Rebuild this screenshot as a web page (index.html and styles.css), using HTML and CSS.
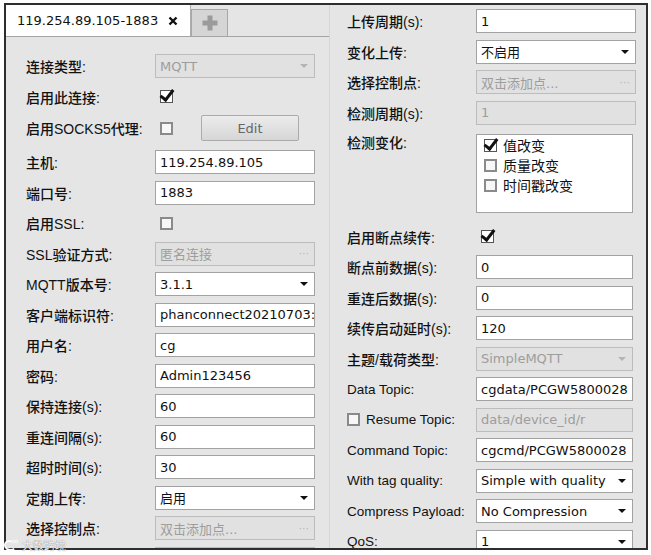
FILE: index.html
```html
<!DOCTYPE html>
<html lang="zh-CN">

<head>
  <meta charset="utf-8">
  <title>MQTT 连接设置</title>
  <link rel="stylesheet" href="styles.css">
</head>

<body>
  <div class="window">

    <!-- Left column: connection -->
    <div class="pane pane-left">
      <div class="tabs">
        <div class="tab tab-active">
          <span>119.254.89.105-1883</span>
          <svg class="tab-close" width="10" height="10" viewBox="0 0 10 10">
            <path d="M1.5 1.5 L8.5 8.5 M8.5 1.5 L1.5 8.5" stroke="#111" stroke-width="2.4" />
          </svg>
        </div>
        <div class="tab tab-add">
          <svg width="18" height="18" viewBox="0 0 18 18">
            <path d="M9 1.5 V16.5 M1.5 9 H16.5" stroke="#9b9b9b" stroke-width="5" />
          </svg>
        </div>
      </div>

      <div class="form">
        <div class="row">
          <label>连接类型:</label>
          <div class="field off">MQTT<span class="caret"></span></div>
        </div>
        <div class="row">
          <label>启用此连接:</label>
          <span class="check on"></span>
        </div>
        <div class="row row-socks">
          <label>启用SOCKS5代理:</label>
          <span class="check"></span>
          <button class="btn">Edit</button>
        </div>
        <div class="row">
          <label>主机:</label>
          <div class="field">119.254.89.105</div>
        </div>
        <div class="row">
          <label>端口号:</label>
          <div class="field">1883</div>
        </div>
        <div class="row">
          <label>启用SSL:</label>
          <span class="check"></span>
        </div>
        <div class="row">
          <label>SSL验证方式:</label>
          <div class="field off">匿名连接<span class="dots">···</span></div>
        </div>
        <div class="row">
          <label>MQTT版本号:</label>
          <div class="field">3.1.1<span class="caret"></span></div>
        </div>
        <div class="row">
          <label>客户端标识符:</label>
          <div class="field">phanconnect20210703:</div>
        </div>
        <div class="row">
          <label>用户名:</label>
          <div class="field">cg</div>
        </div>
        <div class="row">
          <label>密码:</label>
          <div class="field">Admin123456</div>
        </div>
        <div class="row">
          <label>保持连接(s):</label>
          <div class="field">60</div>
        </div>
        <div class="row">
          <label>重连间隔(s):</label>
          <div class="field">60</div>
        </div>
        <div class="row">
          <label>超时时间(s):</label>
          <div class="field">30</div>
        </div>
        <div class="row">
          <label>定期上传:</label>
          <div class="field">启用<span class="caret"></span></div>
        </div>
        <div class="row">
          <label>选择控制点:</label>
          <div class="field off">双击添加点...<span class="dots">···</span></div>
        </div>
        <div class="row">
          <label>&nbsp;</label>
          <div class="field off"></div>
        </div>
      </div>
    </div>

    <!-- Right column: upload / topics -->
    <div class="pane pane-right">
      <div class="form">
        <div class="row">
          <label>上传周期(s):</label>
          <div class="field">1</div>
        </div>
        <div class="row">
          <label>变化上传:</label>
          <div class="field">不启用<span class="caret"></span></div>
        </div>
        <div class="row">
          <label>选择控制点:</label>
          <div class="field off">双击添加点...<span class="dots">···</span></div>
        </div>
        <div class="row">
          <label>检测周期(s):</label>
          <div class="field off">1</div>
        </div>
        <div class="row row-tall">
          <label>检测变化:</label>
          <div class="listbox">
            <div class="item"><span class="check on"></span>值改变</div>
            <div class="item"><span class="check"></span>质量改变</div>
            <div class="item"><span class="check"></span>时间戳改变</div>
          </div>
        </div>
        <div class="row row-resume">
          <label>启用断点续传:</label>
          <span class="check on"></span>
        </div>
        <div class="row">
          <label>断点前数据(s):</label>
          <div class="field narrow">0</div>
        </div>
        <div class="row">
          <label>重连后数据(s):</label>
          <div class="field narrow">0</div>
        </div>
        <div class="row">
          <label>续传启动延时(s):</label>
          <div class="field narrow">120</div>
        </div>
        <div class="row">
          <label>主题/载荷类型:</label>
          <div class="field narrow off">SimpleMQTT<span class="caret"></span></div>
        </div>
        <div class="row">
          <label class="en">Data Topic:</label>
          <div class="field narrow">cgdata/PCGW5800028</div>
        </div>
        <div class="row">
          <label class="en"><span class="check"></span>Resume Topic:</label>
          <div class="field narrow off">data/device_id/r</div>
        </div>
        <div class="row">
          <label class="en">Command Topic:</label>
          <div class="field narrow">cgcmd/PCGW5800028</div>
        </div>
        <div class="row">
          <label class="en">With tag quality:</label>
          <div class="field narrow">Simple with quality<span class="caret"></span></div>
        </div>
        <div class="row">
          <label class="en">Compress Payload:</label>
          <div class="field narrow">No Compression<span class="caret"></span></div>
        </div>
        <div class="row">
          <label class="en">QoS:</label>
          <div class="field narrow">1<span class="caret"></span></div>
        </div>
      </div>
    </div>
  </div>

  <!-- Watermark over the corner -->
  <div class="watermark">
    <svg width="16" height="13" viewBox="0 0 20 16">
      <path d="M11 3 C5 1 1 5 3 10 C5 14 11 14 14 12" fill="none" stroke="#fff" stroke-width="2.2" />
      <circle cx="13" cy="3" r="1.6" fill="none" stroke="#fff" stroke-width="1" />
      <circle cx="17" cy="3" r="1.6" fill="none" stroke="#fff" stroke-width="1" />
    </svg>
    <span>大数跨境</span>
  </div>
</body>

</html>
```

FILE: styles.css
```css
/* Page and window frame */
body {
  margin: 0;
  background-color: #fff;
  font-family: "DejaVu Sans", "Noto Sans CJK SC", sans-serif;
  color: #111;
}

.window {
  position: relative;
  display: flex;
  width: 644px;
  height: 547px;
  margin: 3px 0 0 4px;
  border: 2px solid #2e2e2e;
  box-sizing: border-box;
  background-color: #e5e5e5;
  overflow: hidden;
}

.pane-left {
  width: 324px;
  flex: none;
  border-right: 1px solid #d6d6d6;
  box-sizing: border-box;
}

.pane-right {
  flex: 1;
  padding: 4px 0 0 17px;
}

/* Tab strip */
.tabs {
  display: flex;
  align-items: flex-end;
  height: 31px;
  border-bottom: 1px solid #a4a4a4;
}

.tab {
  box-sizing: border-box;
  display: flex;
  align-items: center;
}

.tab-active {
  width: 185px;
  height: 31px;
  padding-left: 11px;
  background-color: #fff;
  border-right: 1px solid #adadad;
  font-size: 13px;
}

.tab-close {
  margin-left: 10px;
}

.tab-add {
  width: 37px;
  height: 27px;
  justify-content: center;
  background-color: #d5d5d5;
  border: 1px solid #a8a8a8;
  border-bottom: none;
}

/* Form rows */
.form {
  display: flex;
  flex-direction: column;
  gap: 6.5px;
}

.pane-left .form {
  padding: 17px 0 0 20px;
}

.row {
  display: flex;
  align-items: center;
  height: 24px;
  flex: none;
}

.row label {
  width: 129px;
  flex: none;
  font-family: "Liberation Sans", "Noto Sans CJK SC", sans-serif;
  font-size: 14px;
  font-weight: 500;
  color: #111;
  white-space: nowrap;
}

.row label.en {
  display: flex;
  align-items: center;
  font-size: 13.5px;
  font-weight: normal;
}

.row-socks {
  height: 26px;
  margin-bottom: 2.5px;
}

.row-tall {
  height: 79px;
  align-items: flex-start;
  margin-top: 3px;
}

.row-tall label {
  line-height: 18px;
}

.row-resume {
  margin-top: 5px;
}

/* Inputs */
.field {
  display: flex;
  align-items: center;
  width: 160px;
  height: 24px;
  padding-left: 4px;
  box-sizing: border-box;
  border: 1px solid #a2a2a2;
  background-color: #fff;
  font-size: 13px;
  white-space: nowrap;
  overflow: hidden;
}

.field.narrow {
  width: 157px;
}

.field.off {
  background-color: #e1e1e1;
  border-color: #bcbcbc;
  color: #9d9d9d;
}

.caret {
  margin-left: auto;
  margin-right: 6px;
  border-left: 4px solid transparent;
  border-right: 4px solid transparent;
  border-top: 4px solid #111;
}

.field.off .caret {
  border-top-color: #b4b4b4;
}

.dots {
  margin-left: auto;
  margin-right: 5px;
  color: #b9b9b9;
  font-size: 11px;
}

/* Checkboxes */
.check {
  position: relative;
  display: inline-block;
  width: 13px;
  height: 13px;
  flex: none;
  margin-left: 5px;
  box-sizing: border-box;
  border: 2px solid #8a8a8a;
  background-color: #f7f7f7;
}

.check.on {
  border: 1px solid #555;
  background-color: #fff;
}

.check.on::after {
  content: "";
  position: absolute;
  left: 2px;
  top: -4px;
  width: 5px;
  height: 11px;
  border-right: 3px solid #111;
  border-bottom: 3px solid #111;
  transform: rotate(38deg);
}

.row label .check {
  margin: 0 6px 0 0;
}

.btn {
  width: 98px;
  height: 26px;
  margin-left: 28px;
  border: 1px solid #ababab;
  border-radius: 2px;
  background: linear-gradient(#ececec, #d6d6d6);
  font-family: "DejaVu Sans", sans-serif;
  font-size: 13px;
  color: #666;
}

/* Change-detection list */
.listbox {
  width: 157px;
  height: 79px;
  box-sizing: border-box;
  border: 1px solid #a2a2a2;
  background-color: #fff;
  padding-left: 2px;
}

.item {
  display: flex;
  align-items: center;
  gap: 6px;
  height: 20px;
  font-family: "Noto Sans CJK SC", sans-serif;
  font-size: 14px;
}

/* Corner watermark */
.watermark {
  position: absolute;
  left: 3px;
  top: 539px;
  display: flex;
  align-items: center;
  gap: 3px;
  height: 13px;
  font-family: "Noto Sans CJK SC", sans-serif;
  font-size: 11px;
  line-height: 13px;
  color: rgba(255, 255, 255, 0.9);
  text-shadow: 0 0 1px #666;
}
```
